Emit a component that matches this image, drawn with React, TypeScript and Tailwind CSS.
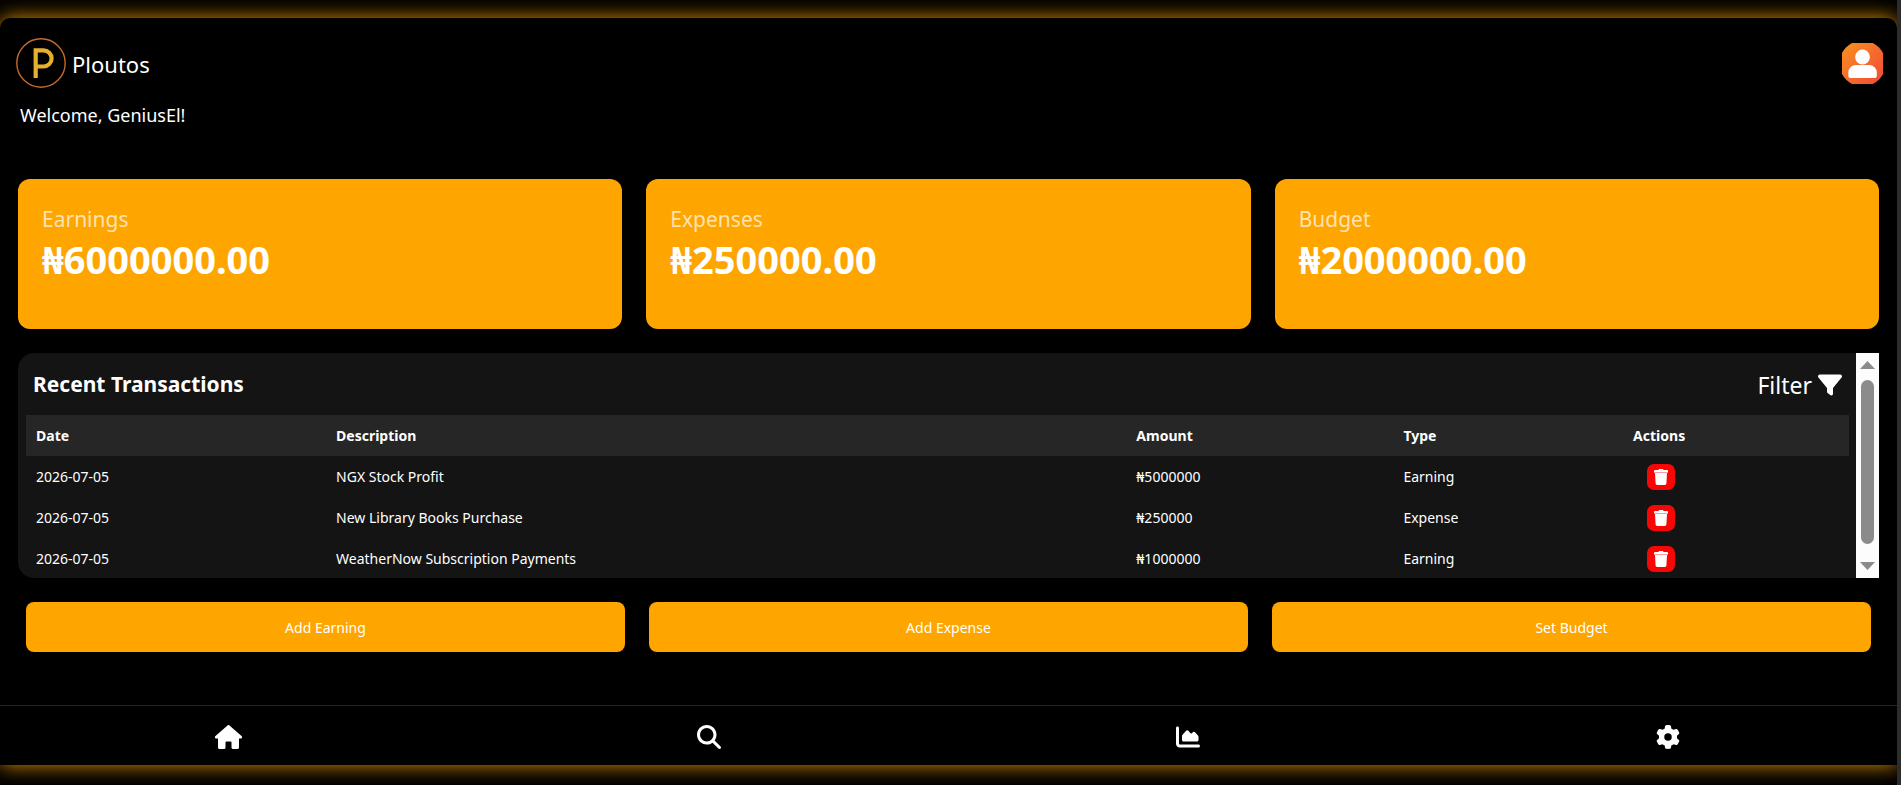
import { FaMagnifyingGlass, FaChartArea, FaGear, FaFilter } from "react-icons/fa6";

const summary = [
  { label: "Earnings", value: "₦6000000.00" },
  { label: "Expenses", value: "₦250000.00" },
  { label: "Budget", value: "₦2000000.00" },
];

const transactions = [
  { date: "2026-07-05", description: "NGX Stock Profit", amount: "₦5000000", type: "Earning" },
  { date: "2026-07-05", description: "New Library Books Purchase", amount: "₦250000", type: "Expense" },
  { date: "2026-07-05", description: "WeatherNow Subscription Payments", amount: "₦1000000", type: "Earning" },
];

function HouseIcon() {
  return (
    <svg viewBox="0 0 27 24" className="h-6 w-[27px]" fill="currentColor" aria-hidden="true">
      <path d="M12.500 0.400a1.500 1.500 0 0 1 2 0L26.500 11a1.400 1.400 0 0 1-1 2.500H24V22.500a1.500 1.500 0 0 1-1.500 1.500H18a1.500 1.500 0 0 1-1.500-1.500V17.500a1 1 0 0 0-1-1h-4a1 1 0 0 0-1 1V22.500A1.500 1.500 0 0 1 9 24H4.500A1.500 1.500 0 0 1 3 22.500V13.500H1.500a1.400 1.400 0 0 1-1-2.500z" />
    </svg>
  );
}

function TrashIcon() {
  return (
    <svg viewBox="0 0 14 16" className="h-4 w-[14px]" fill="currentColor" aria-hidden="true">
      <path d="M4.500 1l.5-1h4l.5 1h3.500a1 1 0 0 1 1 1v1H0V2a1 1 0 0 1 1-1z" />
      <path d="M0 3h14v1H0z" opacity="0.6" />
      <path d="M1 4h12l-.6 10.600a1.500 1.500 0 0 1-1.500 1.400H3.100a1.500 1.500 0 0 1-1.500-1.400z" />
    </svg>
  );
}

const navItems = [
  { label: "Home", icon: <HouseIcon /> },
  { label: "Search", icon: <FaMagnifyingGlass className="size-6" /> },
  { label: "Statistics", icon: <FaChartArea className="size-6" /> },
  { label: "Settings", icon: <FaGear className="size-6" /> },
];

function Logo() {
  return (
    <svg viewBox="0 0 50 50" className="size-[50px]" aria-hidden="true">
      <circle cx="25" cy="25" r="24.2" fill="none" stroke="#c4692c" strokeWidth="1.4" />
      <path d="M19.700 40V12.300H27.500a7.900 7.900 0 0 1 0 16.200H19.700" fill="none" stroke="#e5b02c" strokeWidth="4.2" />
    </svg>
  );
}

function Avatar() {
  return (
    <svg viewBox="0 0 41 41" className="size-[41px]" aria-hidden="true">
      <defs>
        <linearGradient id="avatar" x1="0" y1="0" x2="1" y2="1">
          <stop offset="0" stopColor="#f9961e" />
          <stop offset="1" stopColor="#f0443a" />
        </linearGradient>
      </defs>
      <circle cx="20.5" cy="20.5" r="23" fill="url(#avatar)" />
      <circle cx="20.5" cy="14" r="7.4" fill="#fff" />
      <path d="M6.300 29.500a7.500 7.500 0 0 1 7.500-7.500h13.500a7.500 7.500 0 0 1 7.500 7.500v3.500a2 2 0 0 1-2 2H8.300a2 2 0 0 1-2-2z" fill="#fff" />
    </svg>
  );
}

function ScrollTrack() {
  return (
    <div className="flex w-[23px] shrink-0 flex-col items-center bg-[#fcfcfc] py-2" aria-hidden="true">
      <svg viewBox="0 0 15 8" className="h-2 w-[15px]">
        <path d="M0 8L7.500 0L15 8z" fill="#8b8b8b" />
      </svg>
      <div className="mt-[11px] mb-[18px] w-[13px] flex-1 rounded-full bg-[#8b8b8b]" />
      <svg viewBox="0 0 15 8" className="h-2 w-[15px]">
        <path d="M0 0L7.500 8L15 0z" fill="#8b8b8b" />
      </svg>
    </div>
  );
}

export default function App() {
  return (
    <div className="flex min-h-screen flex-col overflow-hidden border-r-4 border-[#2c2c2c] bg-black pt-[18px] pb-5 font-['Noto_Sans',sans-serif] text-white">
      <div className="flex flex-1 flex-col rounded-t-[10px] bg-black shadow-[0_0_20px_rgba(255,165,0,0.9)]">
        <header className="flex items-center justify-between pt-5 pr-[14px] pl-4">
          <div className="flex items-center gap-[6px]">
            <Logo />
            <span className="pt-[2px] text-[22px] leading-8">Ploutos</span>
          </div>
          <button type="button" aria-label="Profile">
            <Avatar />
          </button>
        </header>
        <p className="px-5 pt-[13px] text-[18px] leading-7">Welcome, GeniusEl!</p>

        <main className="flex flex-col gap-6 px-[18px] pt-[50px] pb-[53px]">
          <section className="grid grid-cols-3 gap-6">
            {summary.map((item) => (
              <div key={item.label} className="h-[150px] rounded-xl bg-[#ffa500] px-6 pt-6">
                <h2 className="text-[21px] leading-8 text-white/70">{item.label}</h2>
                <p className="text-[38px] leading-[48px] font-bold">{item.value}</p>
              </div>
            ))}
          </section>

          <section className="flex h-[225px] overflow-hidden rounded-l-2xl bg-[#141414]">
            <div className="flex-1 pr-[7px] pl-2">
              <div className="flex h-[62px] items-center justify-between px-[7px] pt-[2px]">
                <h2 className="text-[21px] font-bold">Recent Transactions</h2>
                <button type="button" className="flex items-center gap-[6px] text-[23px]">
                  Filter
                  <FaFilter className="size-6" />
                </button>
              </div>
              <table className="w-full table-fixed text-left text-[14px] leading-5">
                <thead>
                  <tr className="h-[41px] bg-[#262626]">
                    <th className="w-[16.46%] px-[10px]">Date</th>
                    <th className="w-[43.9%] px-[10px]">Description</th>
                    <th className="w-[14.65%] px-[10px]">Amount</th>
                    <th className="w-[12.6%] px-[10px]">Type</th>
                    <th className="px-[10px]">Actions</th>
                  </tr>
                </thead>
                <tbody>
                  {transactions.map((row) => (
                    <tr key={row.description} className="h-[41px]">
                      <td className="px-[10px]">{row.date}</td>
                      <td className="px-[10px]">{row.description}</td>
                      <td className="px-[10px]">{row.amount}</td>
                      <td className="px-[10px]">{row.type}</td>
                      <td className="px-6">
                        <button
                          type="button"
                          aria-label={"Delete " + row.description}
                          className="flex h-[26px] w-7 items-center justify-center rounded-[7px] bg-[#f80606]"
                        >
                          <TrashIcon />
                        </button>
                      </td>
                    </tr>
                  ))}
                </tbody>
              </table>
            </div>
            <ScrollTrack />
          </section>

          <section className="grid grid-cols-3 gap-6 px-2">
            {["Add Earning", "Add Expense", "Set Budget"].map((label) => (
              <button key={label} type="button" className="h-[50px] rounded-lg bg-[#ffa500] text-[14px]">
                {label}
              </button>
            ))}
          </section>
        </main>

        <nav className="mt-auto flex h-[60px] items-center justify-between border-t border-[#262626] bg-black px-[11.36%] pt-[2px]">
          {navItems.map(({ label, icon }) => (
            <a
              key={label}
              href={"#" + label.toLowerCase()}
              aria-label={label}
              className="flex w-[27px] justify-center"
            >
              {icon}
            </a>
          ))}
        </nav>
      </div>
    </div>
  );
}
